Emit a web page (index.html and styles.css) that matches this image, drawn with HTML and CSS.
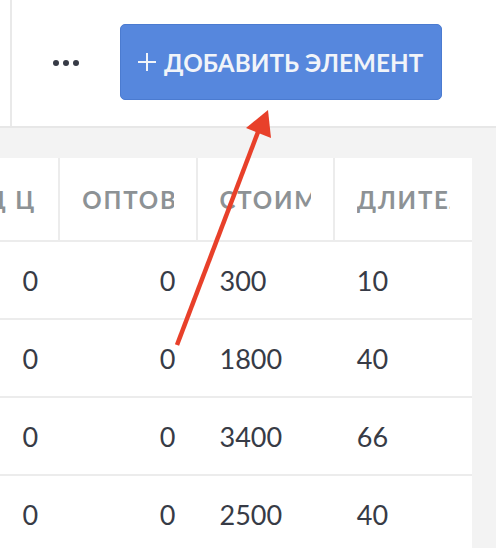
FILE: index.html
```html
<!DOCTYPE html>
<html lang="ru">
<head>
<meta charset="utf-8">
<link rel="stylesheet" href="styles.css">
</head>
<body>
<div class="topbar">
  <div class="toolbar">
    <div class="more"><span class="dot"></span><span class="dot"></span><span class="dot"></span></div>
    <button class="add-btn"><svg class="plus" width="20" height="20" viewBox="0 0 20 20"><path d="M10 1v18M1 10h18" stroke="#f1f4f9" stroke-width="2"/></svg><span>ДОБАВИТЬ ЭЛЕМЕНТ</span></button>
  </div>
</div>
<div class="content">
  <div class="table-view">
    <table class="grid">
      <thead>
        <tr>
          <th><div class="clip end">ЦЕНА Ц Ц</div></th>
          <th><div class="clip">ОПТОВАЯ ЦЕНА</div></th>
          <th><div class="clip">СТОИМОСТЬ</div></th>
          <th><div class="clip">ДЛИТЕЛЬНОСТЬ</div></th>
        </tr>
      </thead>
      <tbody>
        <tr><td class="num">0</td><td class="num">0</td><td>300</td><td>10</td></tr>
        <tr><td class="num">0</td><td class="num">0</td><td>1800</td><td>40</td></tr>
        <tr><td class="num">0</td><td class="num">0</td><td>3400</td><td>66</td></tr>
        <tr><td class="num">0</td><td class="num">0</td><td>2500</td><td>40</td></tr>
      </tbody>
    </table>
  </div>
</div>
<svg class="arrow" width="496" height="548" viewBox="0 0 496 548">
  <line x1="177" y1="345" x2="258" y2="132" stroke="#e8402a" stroke-width="4.5"/>
  <polygon points="268,110 246,128 271,138" fill="#e8402a"/>
</svg>
</body>
</html>
```
FILE: styles.css
```css
* { box-sizing: border-box; }
html, body { margin: 0; padding: 0; }
body {
  width: 496px;
  height: 548px;
  overflow: hidden;
  background: #f3f3f3;
  font-family: "Lato", "Open Sans", sans-serif;
  position: relative;
}
.topbar {
  height: 128px;
  background: #fff;
  border-bottom: 2px solid #e7e7e7;
  padding-left: 10px;
}
.toolbar {
  height: 100%;
  border-left: 2px solid #e9e9e9;
  display: flex;
  align-items: center;
  justify-content: flex-end;
  padding-right: 54px;
  gap: 41px;
}
.more {
  display: flex;
  gap: 4px;
  align-items: center;
}
.dot {
  width: 6px;
  height: 6px;
  border-radius: 50%;
  background: #373b46;
}
.add-btn {
  height: 76px;
  width: 322px;
  margin-top: -2px;
  background: #5687dd;
  border: 1px solid #4b7bd0;
  border-radius: 5px;
  color: #f1f4f9;
  font-family: "Lato", "Open Sans", sans-serif;
  font-weight: 700;
  font-size: 24.2px;
  letter-spacing: 0.1px;
  padding: 0 0 0 16px;
  white-space: nowrap;
  display: flex;
  align-items: center;
  gap: 7px;
}
.plus { display: block; }
.content {
  padding-top: 30px;
}
.table-view {
  width: 472px;
  overflow: hidden;
  background: #fff;
}
.grid {
  margin-left: -77px;
  border-collapse: separate;
  border-spacing: 0;
  table-layout: fixed;
  width: 549px;
}
.grid th, .grid td {
  width: 137px;
  padding: 0 22px;
  white-space: nowrap;
}
.grid th {
  height: 84px;
  text-align: left;
  font-weight: 700;
  font-size: 24px;
  letter-spacing: 1.8px;
  color: #8d9295;
  border-right: 2px solid #ececec;
  border-bottom: 2px solid #ececec;
}
.grid th:last-child { border-right: none; }
.clip {
  overflow: hidden;
  white-space: nowrap;
}
.clip.end {
  display: flex;
  justify-content: flex-end;
}
.grid td {
  height: 78px;
  font-size: 27px;
  color: #373b46;
  border-bottom: 2px solid #ececec;
}
.grid td.num { text-align: right; }
.arrow {
  position: absolute;
  left: 0;
  top: 0;
  pointer-events: none;
}
```
